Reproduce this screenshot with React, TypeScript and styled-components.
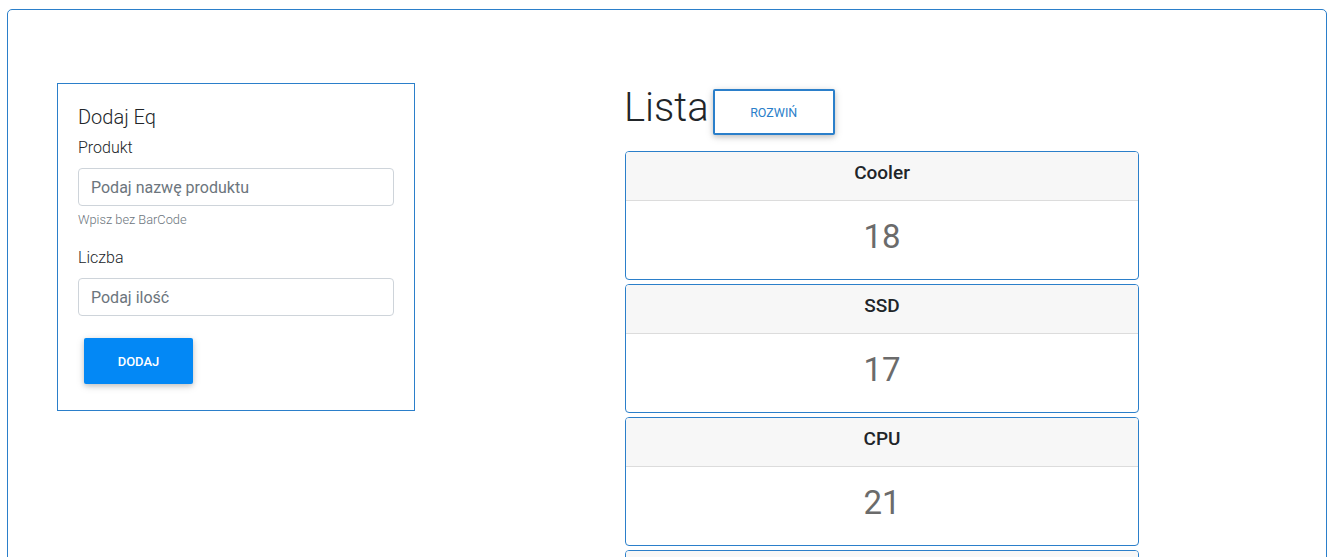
import React from "react";
import styled, { createGlobalStyle } from "styled-components";

const Global = createGlobalStyle`
  html, body { margin: 0; padding: 0; background: #fff; overflow: hidden; }
  body { font-family: Roboto, "Liberation Sans", sans-serif; font-weight: 300; color: #212529; }
  * { box-sizing: border-box; }
`;

const BLUE = "#2b7fca";

const Frame = styled.div`
  margin: 9px 0 0 7px;
  width: 1320px;
  min-height: 700px;
  border: 1px solid ${BLUE};
  border-radius: 5px;
  padding: 73px 0 0 49px;
  display: flex;
  align-items: flex-start;
  gap: 210px;
`;

const FormCard = styled.form`
  width: 358px;
  border: 1px solid ${BLUE};
  padding: 21px 20px 26px 20px;
`;

const FormTitle = styled.h4`
  margin: 0 0 7px;
  font-size: 20px;
  line-height: 24px;
  font-weight: 300;
`;

const Group = styled.div`
  margin-bottom: 17px;
`;

const Label = styled.label`
  display: block;
  margin-bottom: 8px;
  font-size: 16px;
  line-height: 24px;
  font-weight: 300;
`;

const Input = styled.input`
  display: block;
  width: 100%;
  height: 38px;
  padding: 6px 12px;
  border: 1px solid #ced4da;
  border-radius: 4px;
  font-family: Roboto, "Liberation Sans", sans-serif;
  font-size: 16px;
  font-weight: 400;
  color: #495057;
  &::placeholder { color: #6c757d; opacity: 1; }
`;

const Hint = styled.small`
  display: block;
  margin-top: 4px;
  font-size: 12.8px;
  line-height: 19px;
  color: #6c757d;
`;

const Button = styled.button<{ $outline?: boolean }>`
  font-family: Roboto, "Liberation Sans", sans-serif;
  font-size: ${(p) => (p.$outline ? "12.5px" : "13px")};
  font-weight: ${(p) => (p.$outline ? 400 : 500)};
  text-transform: uppercase;
  letter-spacing: 0;
  height: 46px;
  border-radius: 2px;
  cursor: pointer;
  box-shadow: 0 2px 5px 0 rgba(0, 0, 0, 0.16), 0 2px 10px 0 rgba(0, 0, 0, 0.12);
  background: ${(p) => (p.$outline ? "#fff" : "#0388f5")};
  color: ${(p) => (p.$outline ? BLUE : "#fff")};
  border: ${(p) => (p.$outline ? `2px solid ${BLUE}` : "none")};
  width: ${(p) => (p.$outline ? "122px" : "109px")};
`;

const SubmitButton = styled(Button)`
  display: block;
  margin: 22px 0 0 6px;
`;

const ListColumn = styled.div`
  width: 514px;
`;

const ListHeader = styled.div`
  display: flex;
  align-items: flex-start;
  margin-bottom: 16px;
  height: 52px;
`;

const ListTitle = styled.h1`
  margin: 1px 0 0 -1px;
  font-size: 40px;
  line-height: 48px;
  font-weight: 300;
`;

const ExpandButton = styled(Button)`
  margin: 6px 0 0 4px;
`;

const Stack = styled.div`
  display: flex;
  flex-direction: column;
  gap: 4px;
`;

const ItemCard = styled.div`
  border: 1px solid ${BLUE};
  border-radius: 4px;
  overflow: hidden;
`;

const ItemHeader = styled.div`
  background: #f7f7f7;
  border-bottom: 1px solid #dcdcdc;
  padding: 9px 20px 15px;
  text-align: center;
  font-size: 19px;
  line-height: 24px;
  font-weight: 500;
  color: #212529;
`;

const ItemBody = styled.div`
  padding: 16px 20px 22px;
  text-align: center;
  font-size: 33px;
  line-height: 40px;
  font-weight: 400;
  color: #6b6b6b;
`;

const items = [
  { name: "Cooler", count: 18 },
  { name: "SSD", count: 17 },
  { name: "CPU", count: 21 },
  { name: "RAM", count: 12 },
];

export default function App() {
  return (
    <>
      <Global />
      <Frame>
        <FormCard onSubmit={(e) => e.preventDefault()}>
          <FormTitle>Dodaj Eq</FormTitle>
          <Group>
            <Label>Produkt</Label>
            <Input placeholder="Podaj nazwę produktu" />
            <Hint>Wpisz bez BarCode</Hint>
          </Group>
          <Group>
            <Label>Liczba</Label>
            <Input placeholder="Podaj ilość" />
          </Group>
          <SubmitButton type="submit">Dodaj</SubmitButton>
        </FormCard>
        <ListColumn>
          <ListHeader>
            <ListTitle>Lista</ListTitle>
            <ExpandButton $outline type="button">Rozwiń</ExpandButton>
          </ListHeader>
          <Stack>
            {items.map((it) => (
              <ItemCard key={it.name}>
                <ItemHeader>{it.name}</ItemHeader>
                <ItemBody>{it.count}</ItemBody>
              </ItemCard>
            ))}
          </Stack>
        </ListColumn>
      </Frame>
    </>
  );
}
